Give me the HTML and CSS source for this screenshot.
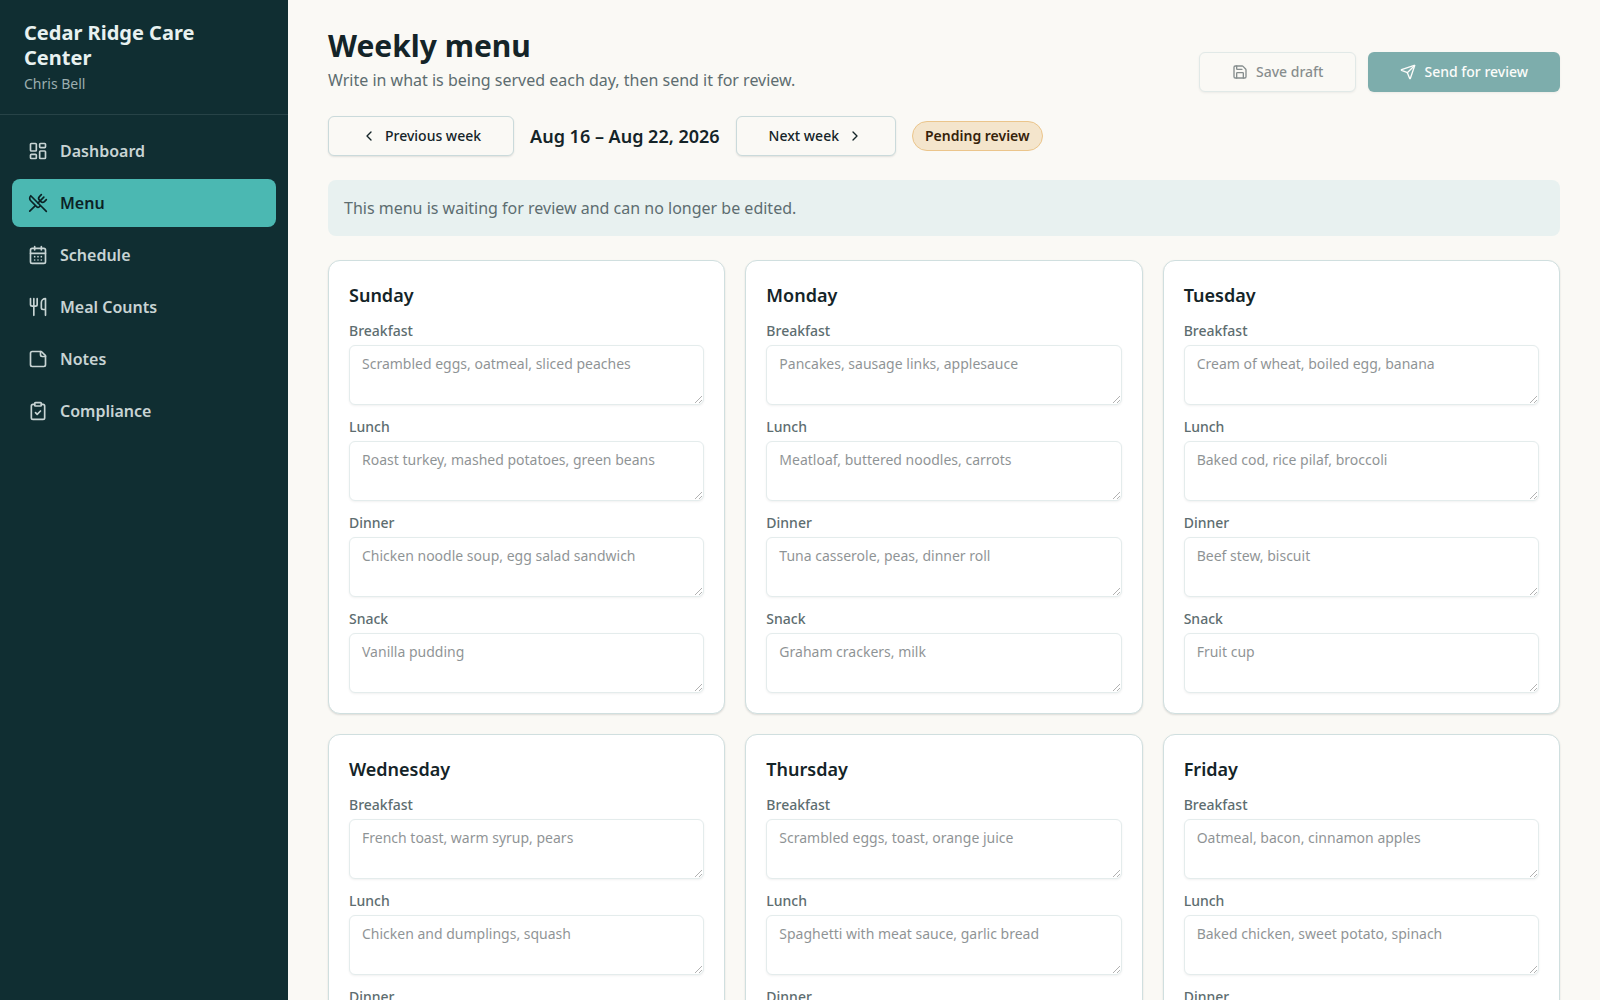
FILE: index.html
```html
<!DOCTYPE html>
<html lang="en">
<head>
    <meta charset="UTF-8">
    <meta name="viewport" content="width=device-width, initial-scale=1.0">
    <title>Weekly menu</title>
    <link rel="stylesheet" href="styles.css">
</head>
<body>
    <div class="layout">
        <aside class="sidebar">
            <div class="brand">
                <p class="brand-name">Cedar Ridge Care Center</p>
                <p class="brand-user">Chris Bell</p>
            </div>
            <nav class="nav">
                <a href="#" class="nav-link">
                    <svg class="icon" viewBox="0 0 24 24"><rect width="7" height="9" x="3" y="3" rx="1"/><rect width="7" height="5" x="14" y="3" rx="1"/><rect width="7" height="9" x="14" y="12" rx="1"/><rect width="7" height="5" x="3" y="16" rx="1"/></svg>
                    Dashboard
                </a>
                <a href="#" class="nav-link active">
                    <svg class="icon" viewBox="0 0 24 24"><path d="m16 2-2.3 2.3a3 3 0 0 0 0 4.2l1.8 1.8a3 3 0 0 0 4.2 0L22 8"/><path d="M15 15 3.3 3.3a4.2 4.2 0 0 0 0 6l7.3 7.3c.7.7 2 .7 2.8 0L15 15Zm0 0 7 7"/><path d="m2.1 21.8 6.4-6.3"/><path d="m19 5-7 7"/></svg>
                    Menu
                </a>
                <a href="#" class="nav-link">
                    <svg class="icon" viewBox="0 0 24 24"><path d="M8 2v4"/><path d="M16 2v4"/><rect width="18" height="18" x="3" y="4" rx="2"/><path d="M3 10h18"/><path d="M8 14h.01"/><path d="M12 14h.01"/><path d="M16 14h.01"/><path d="M8 18h.01"/><path d="M12 18h.01"/><path d="M16 18h.01"/></svg>
                    Schedule
                </a>
                <a href="#" class="nav-link">
                    <svg class="icon" viewBox="0 0 24 24"><path d="M3 2v7c0 1.1.9 2 2 2h4a2 2 0 0 0 2-2V2"/><path d="M7 2v20"/><path d="M21 15V2a5 5 0 0 0-5 5v6c0 1.1.9 2 2 2h3Zm0 0v7"/></svg>
                    Meal Counts
                </a>
                <a href="#" class="nav-link">
                    <svg class="icon" viewBox="0 0 24 24"><path d="M16 3H5a2 2 0 0 0-2 2v14a2 2 0 0 0 2 2h14a2 2 0 0 0 2-2V8Z"/><path d="M15 3v4a2 2 0 0 0 2 2h4"/></svg>
                    Notes
                </a>
                <a href="#" class="nav-link">
                    <svg class="icon" viewBox="0 0 24 24"><rect width="8" height="4" x="8" y="2" rx="1"/><path d="M16 4h2a2 2 0 0 1 2 2v14a2 2 0 0 1-2 2H6a2 2 0 0 1-2-2V6a2 2 0 0 1 2-2h2"/><path d="m9 14 2 2 4-4"/></svg>
                    Compliance
                </a>
            </nav>
        </aside>

        <main class="main">
            <header class="page-header">
                <div>
                    <h1>Weekly menu</h1>
                    <p class="subtitle">Write in what is being served each day, then send it for review.</p>
                </div>
                <div class="actions">
                    <button type="button" class="btn" disabled>
                        <svg class="icon" viewBox="0 0 24 24"><path d="M15.2 3a2 2 0 0 1 1.4.6l3.8 3.8a2 2 0 0 1 .6 1.4V19a2 2 0 0 1-2 2H5a2 2 0 0 1-2-2V5a2 2 0 0 1 2-2z"/><path d="M17 21v-7a1 1 0 0 0-1-1H8a1 1 0 0 0-1 1v7"/><path d="M7 3v4a1 1 0 0 0 1 1h7"/></svg>
                        Save draft
                    </button>
                    <button type="button" class="btn btn-primary" disabled>
                        <svg class="icon" viewBox="0 0 24 24"><path d="M14.536 21.686a.5.5 0 0 0 .937-.024l6.5-19a.496.496 0 0 0-.635-.635l-19 6.5a.5.5 0 0 0-.024.937l7.93 3.18a2 2 0 0 1 1.112 1.11z"/><path d="m21.854 2.147-10.94 10.939"/></svg>
                        Send for review
                    </button>
                </div>
            </header>

            <div class="week">
                <button type="button" class="btn">
                    <svg class="icon" viewBox="0 0 24 24"><path d="m15 18-6-6 6-6"/></svg>
                    Previous week
                </button>
                <span class="week-range">Aug 16 – Aug 22, 2026</span>
                <button type="button" class="btn">
                    Next week
                    <svg class="icon" viewBox="0 0 24 24"><path d="m9 18 6-6-6-6"/></svg>
                </button>
                <span class="badge">Pending review</span>
            </div>

            <p class="notice">This menu is waiting for review and can no longer be edited.</p>

            <div class="days">
                <section class="card">
                    <h2>Sunday</h2>
                    <div class="field">
                        <label for="sun-breakfast">Breakfast</label>
                        <textarea id="sun-breakfast" rows="2" placeholder="Scrambled eggs, oatmeal, sliced peaches" disabled></textarea>
                    </div>
                    <div class="field">
                        <label for="sun-lunch">Lunch</label>
                        <textarea id="sun-lunch" rows="2" placeholder="Roast turkey, mashed potatoes, green beans" disabled></textarea>
                    </div>
                    <div class="field">
                        <label for="sun-dinner">Dinner</label>
                        <textarea id="sun-dinner" rows="2" placeholder="Chicken noodle soup, egg salad sandwich" disabled></textarea>
                    </div>
                    <div class="field">
                        <label for="sun-snack">Snack</label>
                        <textarea id="sun-snack" rows="2" placeholder="Vanilla pudding" disabled></textarea>
                    </div>
                </section>

                <section class="card">
                    <h2>Monday</h2>
                    <div class="field">
                        <label for="mon-breakfast">Breakfast</label>
                        <textarea id="mon-breakfast" rows="2" placeholder="Pancakes, sausage links, applesauce" disabled></textarea>
                    </div>
                    <div class="field">
                        <label for="mon-lunch">Lunch</label>
                        <textarea id="mon-lunch" rows="2" placeholder="Meatloaf, buttered noodles, carrots" disabled></textarea>
                    </div>
                    <div class="field">
                        <label for="mon-dinner">Dinner</label>
                        <textarea id="mon-dinner" rows="2" placeholder="Tuna casserole, peas, dinner roll" disabled></textarea>
                    </div>
                    <div class="field">
                        <label for="mon-snack">Snack</label>
                        <textarea id="mon-snack" rows="2" placeholder="Graham crackers, milk" disabled></textarea>
                    </div>
                </section>

                <section class="card">
                    <h2>Tuesday</h2>
                    <div class="field">
                        <label for="tue-breakfast">Breakfast</label>
                        <textarea id="tue-breakfast" rows="2" placeholder="Cream of wheat, boiled egg, banana" disabled></textarea>
                    </div>
                    <div class="field">
                        <label for="tue-lunch">Lunch</label>
                        <textarea id="tue-lunch" rows="2" placeholder="Baked cod, rice pilaf, broccoli" disabled></textarea>
                    </div>
                    <div class="field">
                        <label for="tue-dinner">Dinner</label>
                        <textarea id="tue-dinner" rows="2" placeholder="Beef stew, biscuit" disabled></textarea>
                    </div>
                    <div class="field">
                        <label for="tue-snack">Snack</label>
                        <textarea id="tue-snack" rows="2" placeholder="Fruit cup" disabled></textarea>
                    </div>
                </section>

                <section class="card">
                    <h2>Wednesday</h2>
                    <div class="field">
                        <label for="wed-breakfast">Breakfast</label>
                        <textarea id="wed-breakfast" rows="2" placeholder="French toast, warm syrup, pears" disabled></textarea>
                    </div>
                    <div class="field">
                        <label for="wed-lunch">Lunch</label>
                        <textarea id="wed-lunch" rows="2" placeholder="Chicken and dumplings, squash" disabled></textarea>
                    </div>
                    <div class="field">
                        <label for="wed-dinner">Dinner</label>
                        <textarea id="wed-dinner" rows="2" disabled></textarea>
                    </div>
                </section>

                <section class="card">
                    <h2>Thursday</h2>
                    <div class="field">
                        <label for="thu-breakfast">Breakfast</label>
                        <textarea id="thu-breakfast" rows="2" placeholder="Scrambled eggs, toast, orange juice" disabled></textarea>
                    </div>
                    <div class="field">
                        <label for="thu-lunch">Lunch</label>
                        <textarea id="thu-lunch" rows="2" placeholder="Spaghetti with meat sauce, garlic bread" disabled></textarea>
                    </div>
                    <div class="field">
                        <label for="thu-dinner">Dinner</label>
                        <textarea id="thu-dinner" rows="2" disabled></textarea>
                    </div>
                </section>

                <section class="card">
                    <h2>Friday</h2>
                    <div class="field">
                        <label for="fri-breakfast">Breakfast</label>
                        <textarea id="fri-breakfast" rows="2" placeholder="Oatmeal, bacon, cinnamon apples" disabled></textarea>
                    </div>
                    <div class="field">
                        <label for="fri-lunch">Lunch</label>
                        <textarea id="fri-lunch" rows="2" placeholder="Baked chicken, sweet potato, spinach" disabled></textarea>
                    </div>
                    <div class="field">
                        <label for="fri-dinner">Dinner</label>
                        <textarea id="fri-dinner" rows="2" disabled></textarea>
                    </div>
                </section>
            </div>
        </main>
    </div>
</body>
</html>
```
FILE: styles.css
```css
* {
    box-sizing: border-box;
}

body {
    margin: 0;
    background-color: #faf9f5;
    color: #142428;
    font-family: "Noto Sans", sans-serif;
    font-size: 16px;
    line-height: 24px;
}

h1, h2, p {
    margin: 0;
}

.layout {
    display: flex;
    min-height: 100vh;
}

/* sidebar */
.sidebar {
    width: 288px;
    flex-shrink: 0;
    background-color: #102e32;
    color: #e8f1f0;
}

.brand {
    padding: 20px 24px;
    border-bottom: 1px solid #274347;
}

.brand-name {
    font-size: 20px;
    line-height: 25px;
    font-weight: 700;
}

.brand-user {
    margin-top: 4px;
    font-size: 14px;
    line-height: 20px;
    color: #9caeaf;
}

.nav {
    display: flex;
    flex-direction: column;
    gap: 4px;
    padding: 12px;
}

.nav-link {
    display: flex;
    align-items: center;
    gap: 12px;
    height: 48px;
    padding: 0 16px;
    border-radius: 8px;
    color: #c8d4d4;
    font-weight: 600;
    text-decoration: none;
}

.nav-link.active {
    background-color: #4bb8b2;
    color: #0b2225;
}

.icon {
    width: 16px;
    height: 16px;
    flex-shrink: 0;
    fill: none;
    stroke: currentColor;
    stroke-width: 2;
    stroke-linecap: round;
    stroke-linejoin: round;
}

.nav-link .icon {
    width: 20px;
    height: 20px;
}

/* page */
.main {
    flex: 1;
    min-width: 0;
    padding: 28px 40px;
}

.page-header {
    display: flex;
    align-items: flex-end;
    justify-content: space-between;
    gap: 16px;
    margin-bottom: 24px;
}

h1 {
    font-size: 30px;
    line-height: 36px;
    font-weight: 700;
}

.subtitle {
    margin-top: 4px;
    color: #5d6d70;
}

.actions {
    display: flex;
    gap: 12px;
}

.btn {
    display: inline-flex;
    align-items: center;
    justify-content: center;
    gap: 8px;
    height: 40px;
    padding: 0 32px;
    border: 1px solid #cadadb;
    border-radius: 6px;
    background-color: #faf9f5;
    box-shadow: 0 1px 2px rgba(0, 0, 0, 0.1);
    color: #142428;
    font-family: inherit;
    font-size: 14px;
    line-height: 20px;
    font-weight: 500;
    white-space: nowrap;
    cursor: pointer;
}

.btn:disabled {
    opacity: 0.5;
    cursor: default;
}

.btn-primary {
    border: none;
    background-color: #026465;
    color: #ffffff;
}

.week {
    display: flex;
    align-items: center;
    gap: 16px;
    margin-bottom: 24px;
}

.week-range {
    font-size: 18px;
    line-height: 28px;
    font-weight: 600;
}

.badge {
    padding: 4px 12px;
    border: 1px solid #ebc58b;
    border-radius: 16px;
    background-color: #f4e5cc;
    color: #35220a;
    font-size: 14px;
    line-height: 20px;
    font-weight: 600;
}

.notice {
    margin-bottom: 24px;
    padding: 16px;
    border-radius: 8px;
    background-color: #e8f1f0;
    color: #5d6d70;
}

/* day cards */
.days {
    display: grid;
    grid-template-columns: repeat(3, 1fr);
    gap: 20px;
}

.card {
    display: flex;
    flex-direction: column;
    gap: 12px;
    padding: 20px;
    border: 1px solid #d0dfdf;
    border-radius: 12px;
    background-color: #ffffff;
    box-shadow: 0 1px 2px rgba(0, 0, 0, 0.12);
}

h2 {
    font-size: 18px;
    line-height: 28px;
    font-weight: 600;
}

.field {
    display: flex;
    flex-direction: column;
    gap: 4px;
}

label {
    color: #5d6d70;
    font-size: 14px;
    line-height: 20px;
    font-weight: 500;
}

textarea {
    display: block;
    width: 100%;
    min-height: 60px;
    padding: 8px 12px;
    border: 1px solid #cadadb;
    border-radius: 6px;
    background-color: #ffffff;
    box-shadow: 0 1px 2px rgba(0, 0, 0, 0.1);
    color: #142428;
    font-family: inherit;
    font-size: 14px;
    line-height: 20px;
    resize: vertical;
}

textarea::placeholder {
    color: #1c2a2d;
}

textarea:disabled {
    opacity: 0.5;
}
```
